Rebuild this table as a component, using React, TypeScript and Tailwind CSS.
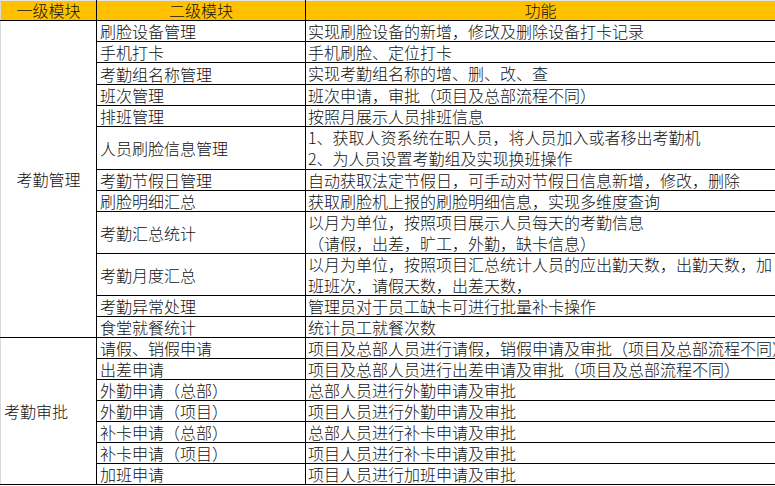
import * as React from "react";

type Row = { sub: string; fn: string[]; h: number };

const attendance: Row[] = [
  { sub: "刷脸设备管理", fn: ["实现刷脸设备的新增，修改及删除设备打卡记录"], h: 21 },
  { sub: "手机打卡", fn: ["手机刷脸、定位打卡"], h: 21 },
  { sub: "考勤组名称管理", fn: ["实现考勤组名称的增、删、改、查"], h: 22 },
  { sub: "班次管理", fn: ["班次申请，审批（项目及总部流程不同）"], h: 21 },
  { sub: "排班管理", fn: ["按照月展示人员排班信息"], h: 21 },
  {
    sub: "人员刷脸信息管理",
    fn: ["1、获取人资系统在职人员，将人员加入或者移出考勤机", "2、为人员设置考勤组及实现换班操作"],
    h: 43,
  },
  { sub: "考勤节假日管理", fn: ["自动获取法定节假日，可手动对节假日信息新增，修改，删除"], h: 21 },
  { sub: "刷脸明细汇总", fn: ["获取刷脸机上报的刷脸明细信息，实现多维度查询"], h: 21 },
  { sub: "考勤汇总统计", fn: ["以月为单位，按照项目展示人员每天的考勤信息", "（请假，出差，旷工，外勤，缺卡信息）"], h: 42 },
  {
    sub: "考勤月度汇总",
    fn: ["以月为单位，按照项目汇总统计人员的应出勤天数，出勤天数，加", "班班次，请假天数，出差天数，"],
    h: 42,
  },
  { sub: "考勤异常处理", fn: ["管理员对于员工缺卡可进行批量补卡操作"], h: 21 },
  { sub: "食堂就餐统计", fn: ["统计员工就餐次数"], h: 21 },
];

const approval: Row[] = [
  { sub: "请假、销假申请", fn: ["项目及总部人员进行请假，销假申请及审批（项目及总部流程不同）"], h: 21 },
  { sub: "出差申请", fn: ["项目及总部人员进行出差申请及审批（项目及总部流程不同）"], h: 21 },
  { sub: "外勤申请（总部）", fn: ["总部人员进行外勤申请及审批"], h: 21 },
  { sub: "外勤申请（项目）", fn: ["项目人员进行外勤申请及审批"], h: 21 },
  { sub: "补卡申请（总部）", fn: ["总部人员进行补卡申请及审批"], h: 20 },
  { sub: "补卡申请（项目）", fn: ["项目人员进行补卡申请及审批"], h: 20 },
  { sub: "加班申请", fn: ["项目人员进行加班申请及审批"], h: 21 },
];

const font = { fontFamily: '"Noto Sans CJK SC", "Noto Sans", sans-serif' };

function Group({ title, rows, align }: { title: string; rows: Row[]; align: "center" | "left" }) {
  return (
    <>
      {rows.map((row, i) => {
        const lineH = (row.h - 1) / row.fn.length;
        return (
          <tr key={row.sub}>
            {i === 0 ? (
              <td
                rowSpan={rows.length}
                className={
                  "border-b border-l border-r border-b-black border-l-[#d9d9d9] border-r-black p-0 align-middle " +
                  (align === "center" ? "text-center" : "pl-[3px] text-left")
                }
              >
                {title}
              </td>
            ) : null}
            <td className="overflow-hidden whitespace-nowrap border border-black py-0 pl-[3px] pr-0 align-middle">
              {row.sub}
            </td>
            <td className="overflow-hidden whitespace-nowrap border border-black py-0 pl-[2px] pr-0 align-middle">
              {row.fn.map((line) => (
                <div key={line} style={{ height: lineH, lineHeight: `${lineH}px` }}>
                  {line}
                </div>
              ))}
            </td>
          </tr>
        );
      })}
    </>
  );
}

export default function App() {
  return (
    <div className="h-[486px] w-[775px] overflow-hidden bg-white text-[16px] font-light leading-[20px] text-[#111]" style={font}>
      <table className="w-[775px] table-fixed border-collapse">
        <colgroup>
          <col className="w-[96px]" />
          <col className="w-[209px]" />
          <col className="w-[470px]" />
        </colgroup>
        <thead>
          <tr className="bg-[#ffc000] leading-[19px]">
            <th className="border-b border-l border-r border-t border-b-black border-l-[#d9d9d9] border-r-black border-t-[#e6e6e6] p-0 font-light">
              一级模块
            </th>
            <th className="border-b border-r border-t border-b-black border-r-black border-t-[#e6e6e6] p-0 font-light">
              二级模块
            </th>
            <th className="border-b border-r border-t border-b-black border-r-black border-t-[#e6e6e6] p-0 font-light">
              功能
            </th>
          </tr>
        </thead>
        <tbody>
          <Group title="考勤管理" rows={attendance} align="center" />
          <Group title="考勤审批" rows={approval} align="left" />
        </tbody>
      </table>
    </div>
  );
}
